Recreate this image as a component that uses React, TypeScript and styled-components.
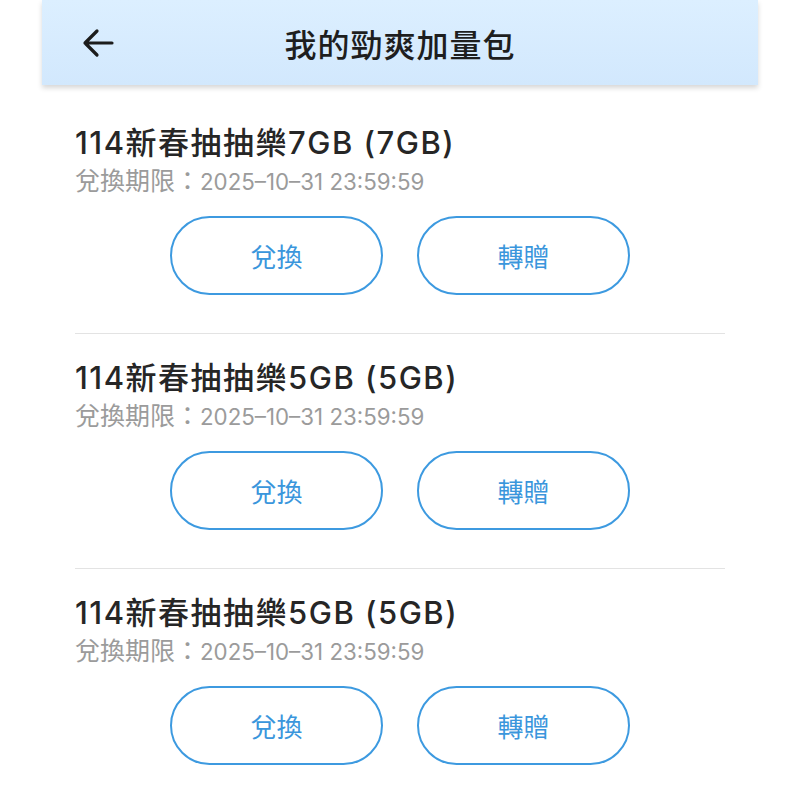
import styled, { createGlobalStyle } from 'styled-components'

const GlobalStyle = createGlobalStyle`
  body {
    margin: 0;
    background: #ffffff;
    font-family: 'Inter', 'Noto Sans CJK TC', sans-serif;
  }
`

const Page = styled.div`
  width: 800px;
  min-height: 800px;
  background: #ffffff;
`

const Header = styled.header`
  margin: 0 42px;
  height: 85px;
  display: flex;
  align-items: center;
  position: relative;
  background: linear-gradient(180deg, #dcefff 0%, #d2e8fd 100%);
  box-shadow: 0 3px 5px rgba(0, 0, 0, 0.16);
`

const BackButton = styled.button`
  position: absolute;
  left: 40px;
  top: 27px;
  width: 32px;
  height: 32px;
  padding: 0;
  border: none;
  background: transparent;
  display: flex;
  align-items: center;
  justify-content: center;
`

const Title = styled.h1`
  flex: 1;
  margin: 0;
  text-align: center;
  font-family: 'Noto Sans CJK TC', sans-serif;
  font-size: 32px;
  font-weight: 500;
  color: #1e1e1e;
  letter-spacing: 1px;
`

const List = styled.div`
  padding: 14px 75px 0;
`

const Item = styled.div`
  padding: 26px 0 38px;
  border-bottom: 1px solid #e3e3e3;
`

const ItemTitle = styled.div`
  font-size: 31px;
  line-height: 36px;
  font-weight: 500;
  color: #262626;
  letter-spacing: 1.5px;
  white-space: nowrap;
`

const Expiry = styled.div`
  margin-top: 3px;
  height: 30px;
  display: flex;
  align-items: baseline;
  color: #9b9b9b;
  white-space: nowrap;
`

const ExpiryLabel = styled.span`
  font-family: 'Noto Sans CJK TC', sans-serif;
  font-size: 25px;
  line-height: 30px;
`

const ExpiryValue = styled.span`
  font-size: 22.3px;
  line-height: 30px;
`

const Actions = styled.div`
  margin-top: 22px;
  display: flex;
  justify-content: center;
  gap: 34px;
`

const PillButton = styled.button`
  width: 213px;
  height: 79px;
  border: 2px solid #3d9ae0;
  border-radius: 40px;
  background: #ffffff;
  color: #3a96dc;
  font-family: 'Noto Sans CJK TC', sans-serif;
  font-size: 26px;
  cursor: pointer;
`

const packs = [
  { name: '114新春抽抽樂7GB (7GB)', expiry: '2025–10–31 23:59:59' },
  { name: '114新春抽抽樂5GB (5GB)', expiry: '2025–10–31 23:59:59' },
  { name: '114新春抽抽樂5GB (5GB)', expiry: '2025–10–31 23:59:59' },
]

function BackArrow() {
  return (
    <svg width="32" height="32" viewBox="0 0 32 32" fill="none">
      <path
        d="M30 16H3M15 4L3 16l12 12"
        stroke="#1c1c1c"
        strokeWidth="3.2"
        strokeLinecap="round"
        strokeLinejoin="round"
      />
    </svg>
  )
}

export default function App() {
  return (
    <Page>
      <GlobalStyle />
      <Header>
        <BackButton aria-label="back">
          <BackArrow />
        </BackButton>
        <Title>我的勁爽加量包</Title>
      </Header>
      <List>
        {packs.map((p, i) => (
          <Item key={i}>
            <ItemTitle>{p.name}</ItemTitle>
            <Expiry>
              <ExpiryLabel>兌換期限：</ExpiryLabel>
              <ExpiryValue>{p.expiry}</ExpiryValue>
            </Expiry>
            <Actions>
              <PillButton>兌換</PillButton>
              <PillButton>轉贈</PillButton>
            </Actions>
          </Item>
        ))}
      </List>
    </Page>
  )
}
